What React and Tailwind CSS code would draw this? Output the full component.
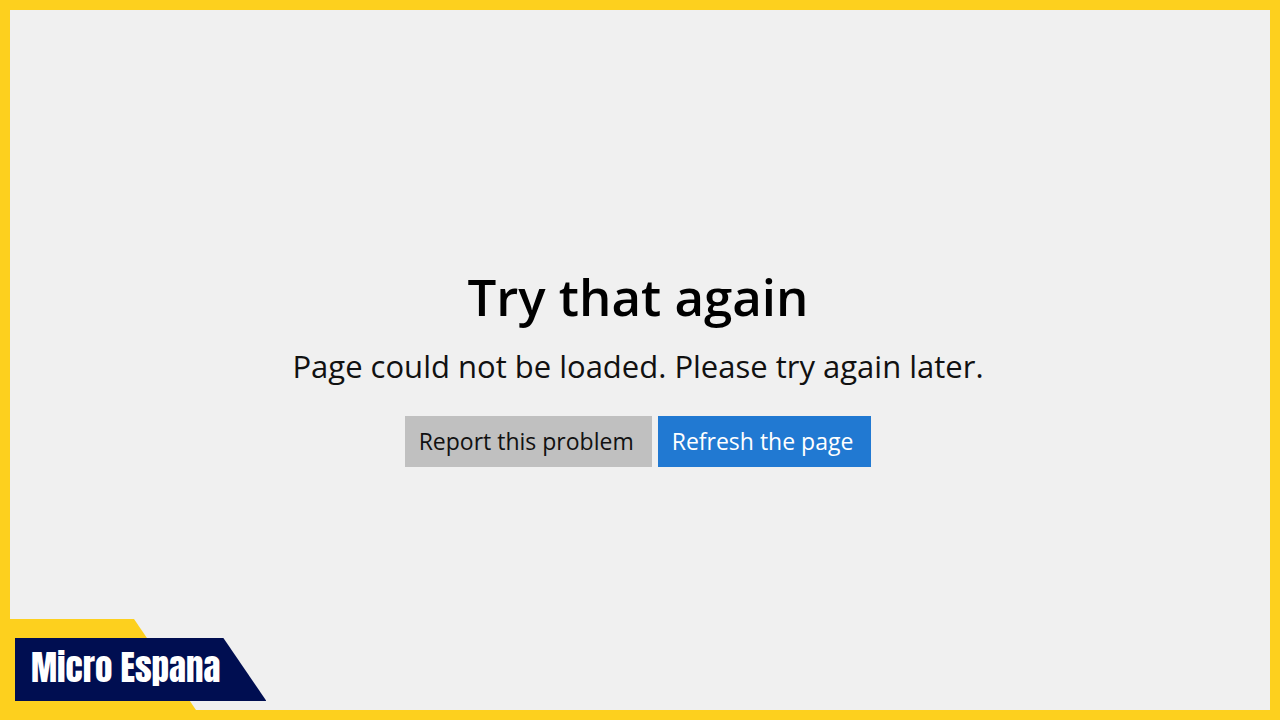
const Badge = () => {
  return (
    <div className="absolute bottom-0 left-0 h-[91px] pl-[5px] pt-[19px]">
      {/* yellow backdrop */}
      <div className="absolute bottom-0 left-0 h-full w-[186px] bg-[#fdd01e] [clip-path:polygon(0_0,124px_0,100%_100%,0_100%)]" />
      {/* channel name */}
      <div className="relative flex h-[63px] items-center bg-[#000e51] pl-4 pr-[46px] [clip-path:polygon(0_0,calc(100%-43px)_0,100%_100%,0_100%)]">
        <span className="whitespace-nowrap pb-1 font-['Anton','Liberation_Sans_Narrow',sans-serif] text-[35px] leading-[48px] text-white">
          Micro Espana
        </span>
      </div>
    </div>
  );
};

const App = () => {
  return (
    <div className="relative flex min-h-screen border-10 border-[#fdd01e] bg-[#f0f0f0] font-['Segoe_UI','Open_Sans',sans-serif]">
      <main className="flex flex-1 flex-col items-center justify-center pr-1 pt-0.5 text-center">
        <h1 className="text-[51px] font-semibold leading-[80px] text-black">
          Try that again
        </h1>
        <p className="mt-1.5 text-[31px] leading-[48px] text-[#111111]">
          Page could not be loaded. Please try again later.
        </p>
        <div className="mt-6.5 flex gap-1.5">
          <button
            type="button"
            className="h-[51px] bg-[#c0c0c0] pl-3.5 pr-4.5 text-[23px] text-[#111111]"
          >
            Report this problem
          </button>
          <button
            type="button"
            className="h-[51px] bg-[#2179d2] pl-3.5 pr-4.5 text-[23px] text-white"
          >
            Refresh the page
          </button>
        </div>
      </main>
      <Badge />
    </div>
  );
};

export default App;
